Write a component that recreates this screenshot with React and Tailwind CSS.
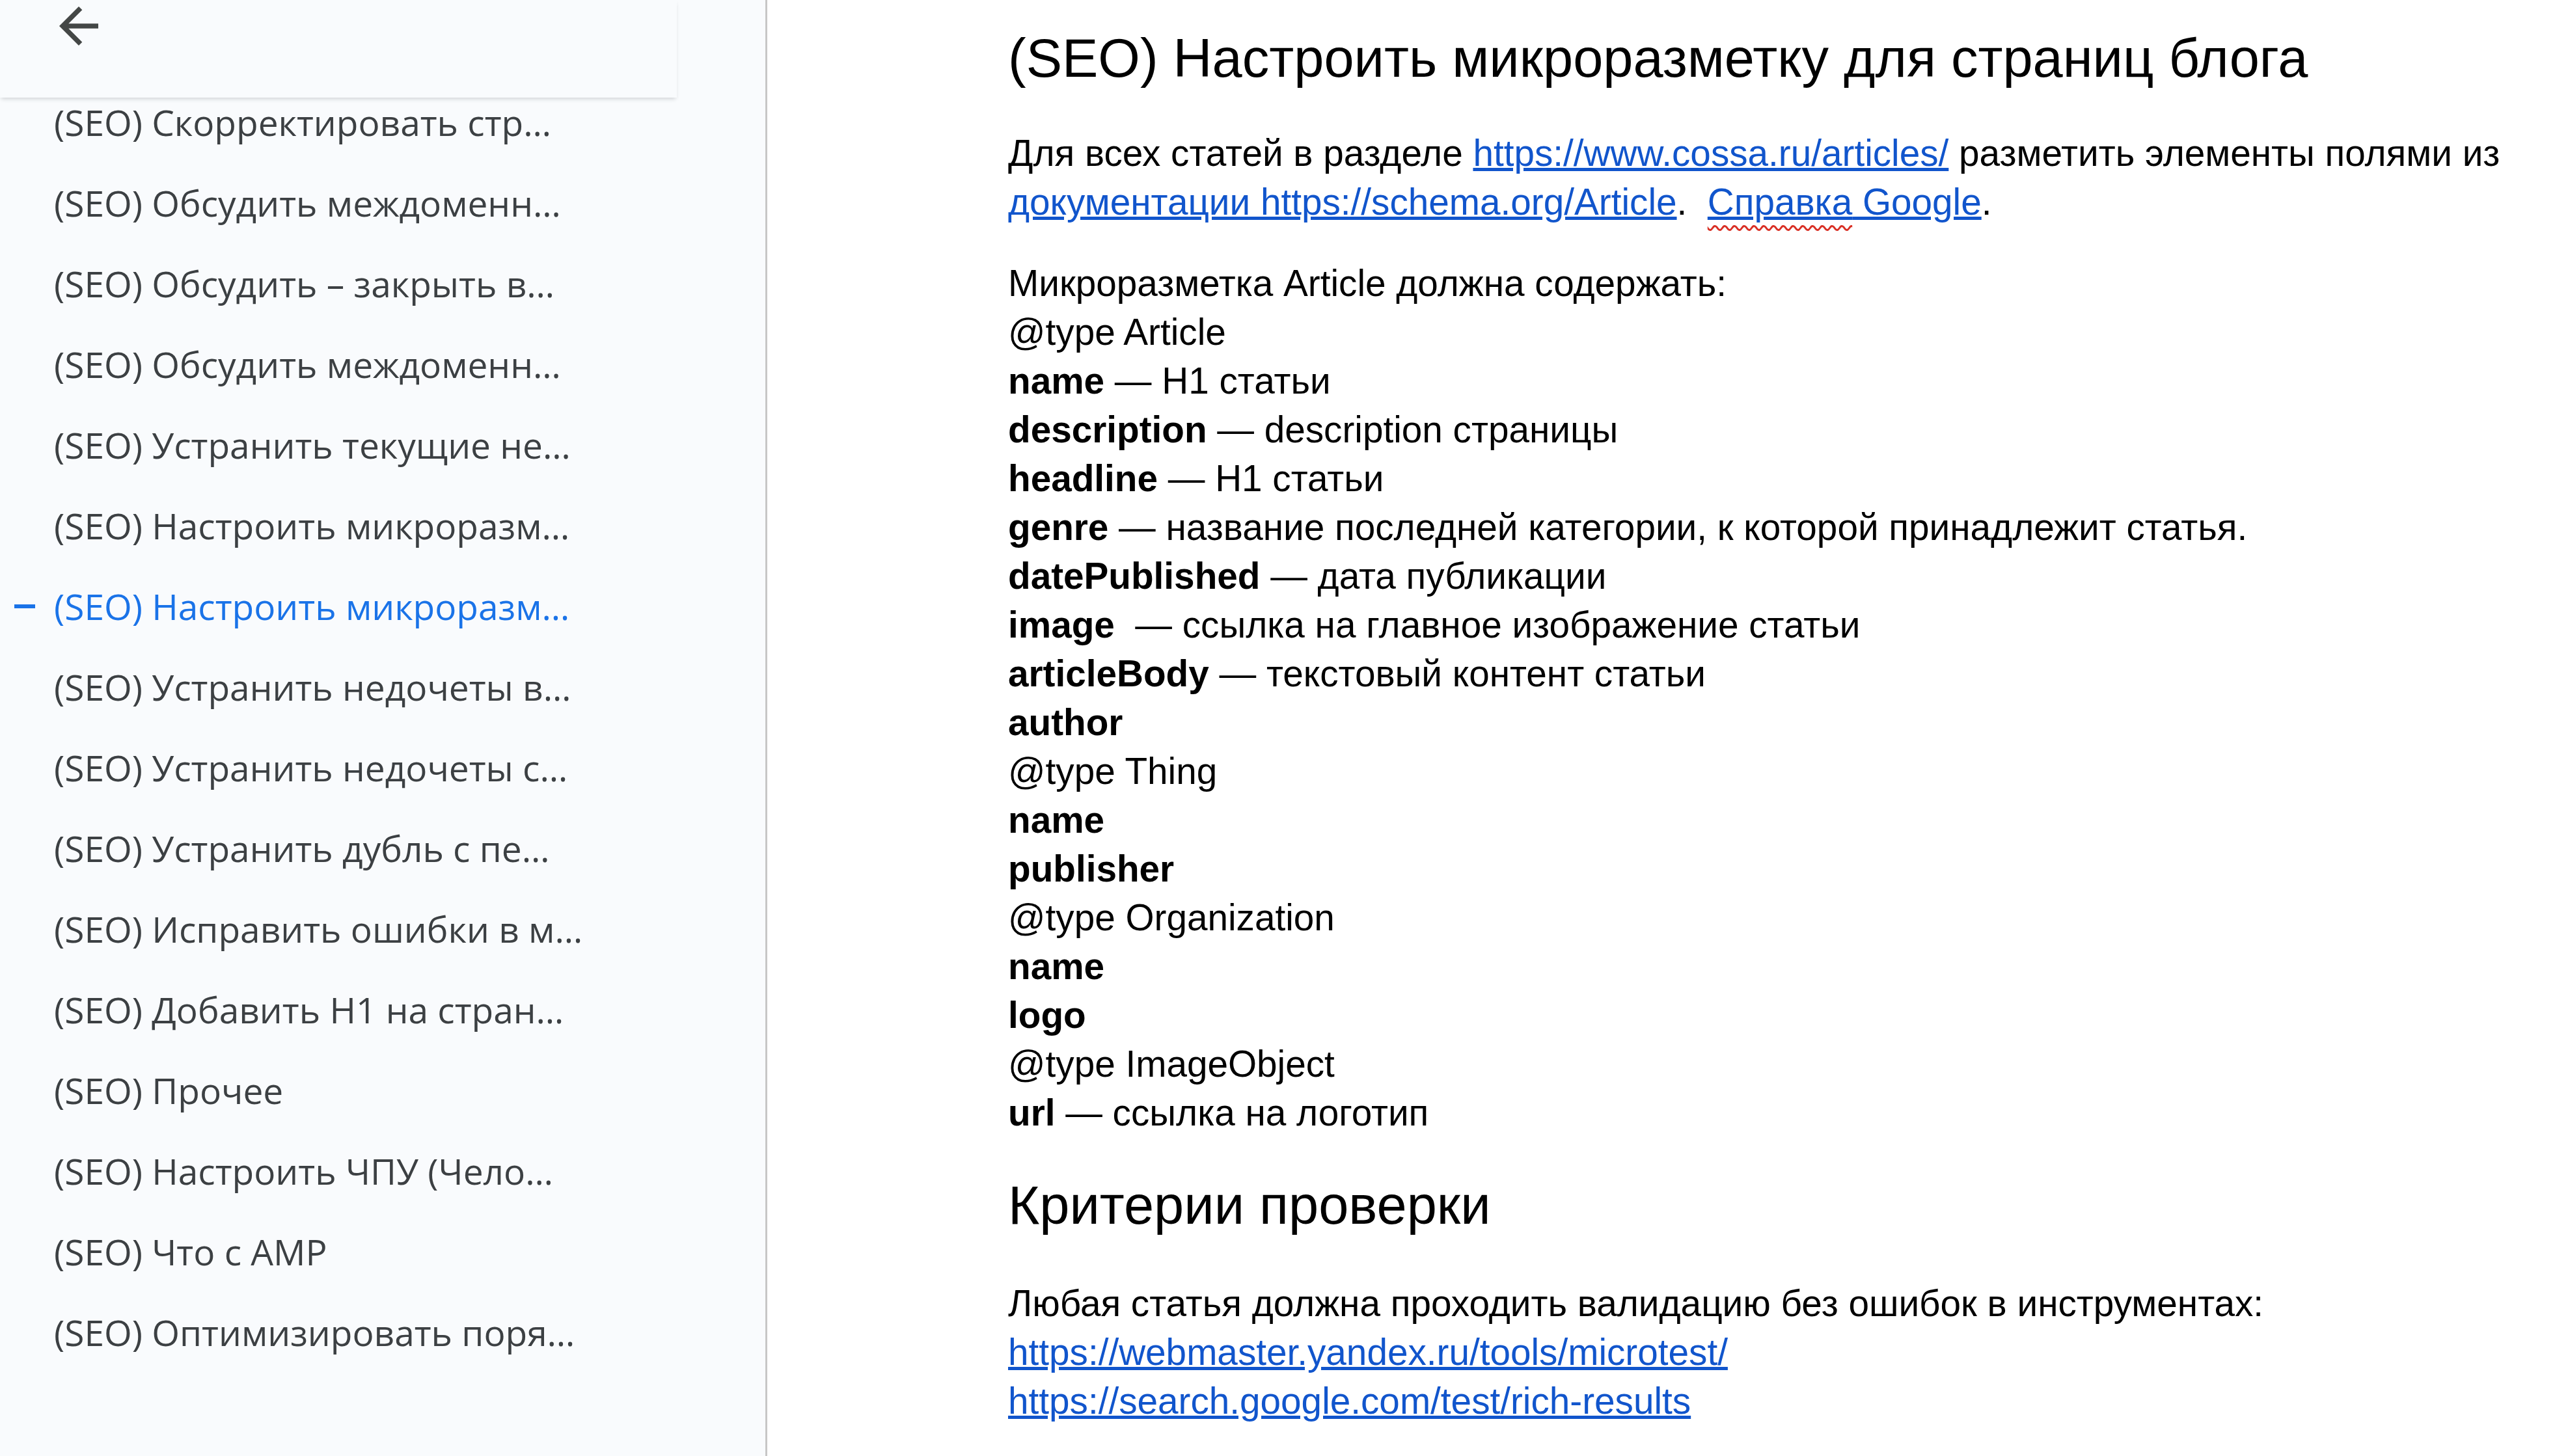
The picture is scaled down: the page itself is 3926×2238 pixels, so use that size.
import React from 'react';

// Outline entries shown in the left panel
const outline = [
  '(SEO) Скорректировать стр…',
  '(SEO) Обсудить междоменн…',
  '(SEO) Обсудить – закрыть в…',
  '(SEO) Обсудить междоменн…',
  '(SEO) Устранить текущие не…',
  '(SEO) Настроить микроразм…',
  '(SEO) Настроить микроразм…',
  '(SEO) Устранить недочеты в…',
  '(SEO) Устранить недочеты с…',
  '(SEO) Устранить дубль с пе…',
  '(SEO) Исправить ошибки в м…',
  '(SEO) Добавить H1 на стран…',
  '(SEO) Прочее',
  '(SEO) Настроить ЧПУ (Чело…',
  '(SEO) Что с AMP',
  '(SEO) Оптимизировать поря…',
];

const ACTIVE = 6;

const fields = [
  { b: null, t: 'Микроразметка Article должна содержать:' },
  { b: null, t: '@type Article' },
  { b: 'name', t: ' — H1 статьи' },
  { b: 'description', t: ' — description страницы' },
  { b: 'headline', t: ' — H1 статьи' },
  { b: 'genre', t: ' — название последней категории, к которой принадлежит статья.' },
  { b: 'datePublished', t: ' — дата публикации' },
  { b: 'image', t: '  — ссылка на главное изображение статьи' },
  { b: 'articleBody', t: ' — текстовый контент статьи' },
  { b: 'author', t: '' },
  { b: null, t: '@type Thing' },
  { b: 'name', t: '' },
  { b: 'publisher', t: '' },
  { b: null, t: '@type Organization' },
  { b: 'name', t: '' },
  { b: 'logo', t: '' },
  { b: null, t: '@type ImageObject' },
  { b: 'url', t: ' — ссылка на логотип' },
];

const Link = ({ children }) => (
  <a href="#" className="text-[#1155cc] underline">
    {children}
  </a>
);

const Sidebar = () => (
  <aside className="flex w-[1179px] shrink-0 flex-col border-r-[3px] border-[#c7c7c7] bg-[#f9fbfd] font-['Open_Sans','Roboto',sans-serif]">
    <div className="relative z-10 h-[150px] w-[1040px] bg-[#f9fbfd] shadow-[0_4px_6px_-2px_rgba(60,64,67,0.22)]">
      <button aria-label="back" className="ml-[76px] -mt-[5px] block text-[#444746]">
        <svg width="90" height="90" viewBox="0 0 24 24" fill="currentColor">
          <path d="M20 11H7.83l5.59-5.59L12 4l-8 8 8 8 1.41-1.41L7.83 13H20v-2z" />
        </svg>
      </button>
    </div>
    <ul className="-mt-[24px]">
      {outline.map((item, i) => (
        <li
          key={i}
          className={
            'flex h-[124px] items-center pl-[22px] text-[55px] whitespace-nowrap ' +
            (i === ACTIVE ? 'text-[#1a73e8]' : 'text-[#3c4043]')
          }
        >
          <span className="mr-[29px] flex w-[32px] items-center">
            {i === ACTIVE && <span className="block h-[6px] w-[32px] bg-[#1a73e8]" />}
          </span>
          <span>{item}</span>
        </li>
      ))}
    </ul>
  </aside>
);

export default function App() {
  return (
    <div className="flex h-[2238px] w-[3926px] overflow-hidden bg-white">
      <Sidebar />
      <main className="flex-1 pl-[370px] pt-[40px] text-black font-['Liberation_Sans',Arial,sans-serif]">
        <h1 className="text-[83px] leading-[100px] whitespace-nowrap">
          (SEO) Настроить микроразметку для страниц блога
        </h1>

        <p className="mt-[58px] text-[56.7px] leading-[75px] whitespace-nowrap">
          Для всех статей в разделе <Link>https://www.cossa.ru/articles/</Link> разметить элементы полями из
          <br />
          <Link>документации https://schema.org/Article</Link>.&nbsp; <Link>
            <span className="underline decoration-wavy decoration-[#d93025] decoration-[3px] underline-offset-[16px]">Справка</span> Google
          </Link>.
        </p>

        <div className="mt-[50px] text-[56.7px] leading-[75px] whitespace-pre">
          {fields.map((f, i) => (
            <div key={i}>
              {f.b && <b>{f.b}</b>}
              {f.t}
            </div>
          ))}
        </div>

        <h2 className="mt-[55px] text-[83px] leading-[100px] whitespace-nowrap">Критерии проверки</h2>

        <div className="mt-[63px] text-[56.7px] leading-[75px] whitespace-nowrap">
          <div>Любая статья должна проходить валидацию без ошибок в инструментах:</div>
          <div><Link>https://webmaster.yandex.ru/tools/microtest/</Link></div>
          <div><Link>https://search.google.com/test/rich-results</Link></div>
        </div>
      </main>
    </div>
  );
}
